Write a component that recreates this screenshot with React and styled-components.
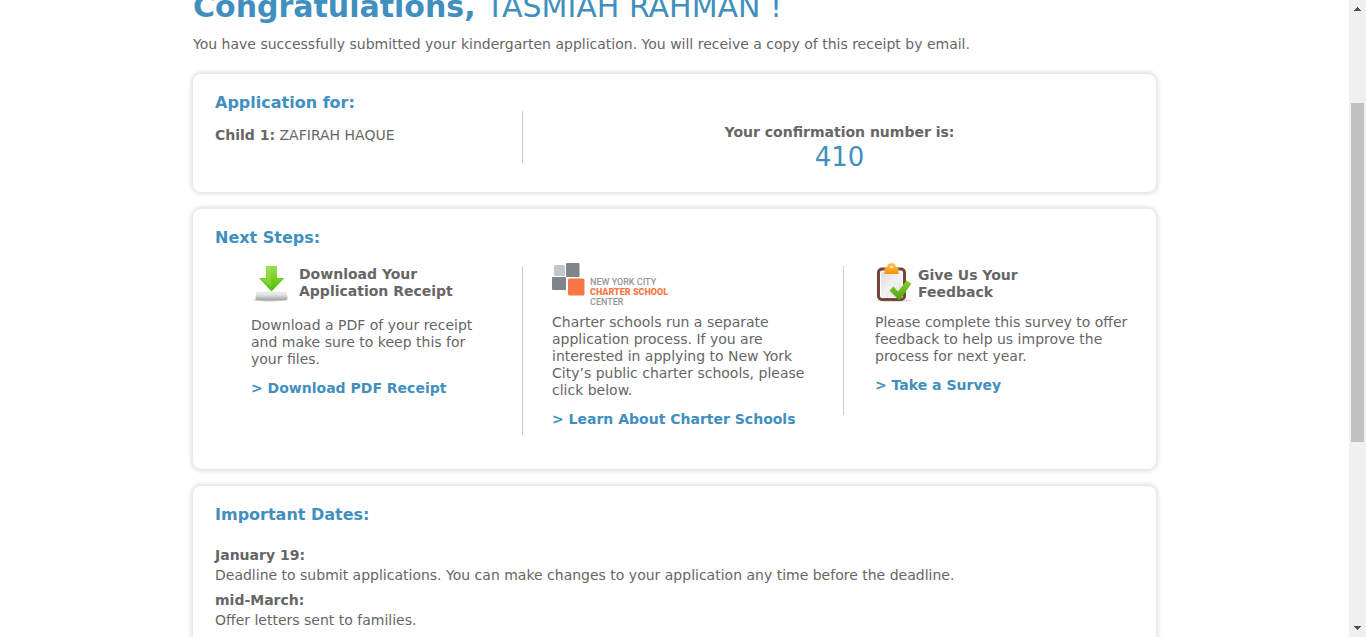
import React from "react";
import styled, { createGlobalStyle } from "styled-components";

const GlobalStyle = createGlobalStyle`
  *, *::before, *::after { box-sizing: border-box; }
  body {
    margin: 0;
    background: #fff;
    color: #666;
    font-family: Verdana, "DejaVu Sans", sans-serif;
    font-size: 14px;
    line-height: 17px;
  }
  h1, h2, h3, p, dl, dd { margin: 0; }
`;

const Window = styled.div`
  display: flex;
  height: 100vh;
  overflow: hidden;
`;

const Viewport = styled.main`
  flex: 1;
  min-width: 0;
  overflow: hidden;
`;

/* The page is shown scrolled, with the top of the title out of view. */
const Page = styled.div`
  max-width: 963px;
  margin: -11px auto 0;
`;

const Title = styled.h1`
  color: #418fbe;
  font-size: 30px;
  line-height: 36px;
  font-weight: 700;
  white-space: nowrap;

  span { font-weight: 400; }
`;

const Intro = styled.p`
  margin: 9px 0 20px;
  line-height: 20px;
`;

const Card = styled.section`
  margin-bottom: 17px;
  padding: 19px 0 ${(p) => p.$bottom}px 22px;
  border-radius: 8px;
  background: #fff;
  box-shadow: 0 0 4px 2px #e0e0e0;
`;

const CardTitle = styled.h2`
  color: #418fbe;
  font-size: 16px;
  line-height: 20px;
`;

const Summary = styled.div`
  display: grid;
  grid-template-columns: 307fr 1px 633fr;
`;

const Child = styled.p`
  margin-top: 14px;
`;

const Divider = styled.div`
  height: ${(p) => p.$height}px;
  margin-top: ${(p) => p.$top}px;
  background: #ccc;
`;

const Confirmation = styled.div`
  margin-top: 31px;
  text-align: center;
`;

const Number = styled.p`
  color: #418fbe;
  font-size: 26px;
  line-height: 32px;
`;

const Steps = styled.div`
  display: grid;
  grid-template-columns: 307fr 1px 320fr 1px 312fr;
  align-items: start;
  margin-top: 15px;
`;

const Step = styled.article`
  padding: 0 ${(p) => p.$right}px 0 ${(p) => p.$left}px;
`;

const StepHead = styled.div`
  display: flex;
  gap: ${(p) => p.$gap}px;
  height: ${(p) => p.$height}px;
`;

const StepTitle = styled.h3`
  margin-top: ${(p) => p.$top}px;
  font-size: 14px;
  line-height: 17px;
`;

const StepLink = styled.a`
  display: block;
  margin-top: 12px;
  color: #418fbe;
  font-weight: 700;
  text-decoration: none;
  white-space: nowrap;
`;

const LogoName = styled.div`
  margin-top: 14px;
  color: #929799;
  font: 500 9px/10px Roboto, sans-serif;
  white-space: nowrap;

  strong {
    display: block;
    color: #f67846;
    font-weight: 900;
  }
`;

const Dates = styled.dl`
  margin-top: 20px;
  line-height: 20px;

  dt { font-weight: 700; }
  dd + dt { margin-top: 5px; }
`;

const ScrollBar = styled.div`
  display: flex;
  flex: 0 0 17px;
  flex-direction: column;
  align-items: center;
  background: #f0f0f0;
`;

const Track = styled.div`
  display: flex;
  flex: 1;
  flex-direction: column;
  width: 13px;
`;

const Thumb = styled.div`
  flex: 339;
  background: #c1c1c1;
`;

const Space = styled.div`
  flex: ${(p) => p.$grow};
`;

const Arrow = ({ down }) => (
  <svg width="17" height="17" viewBox="0 0 17 17" shapeRendering="crispEdges" aria-hidden="true">
    <path
      fill="#505050"
      d={down ? "M5 6h7v1h-1v1h-1v1h-1v1h-1v-1h-1v-1h-1v-1h-1z" : "M5 11h7v-1h-1v-1h-1v-1h-1v-1h-1v1h-1v1h-1v1h-1z"}
    />
  </svg>
);

const DownloadIcon = () => (
  <svg width="38" height="40" viewBox="0 0 38 40" aria-hidden="true">
    <defs>
      <linearGradient id="arrow" x1="0" y1="0" x2="0" y2="1">
        <stop offset="0" stopColor="#a0dc4c" />
        <stop offset=".5" stopColor="#76cf22" />
        <stop offset="1" stopColor="#4fbd0c" />
      </linearGradient>
      <linearGradient id="tray" x1="0" y1="0" x2="0" y2="1">
        <stop offset="0" stopColor="#f2f2f2" />
        <stop offset=".5" stopColor="#d5d5d5" />
        <stop offset="1" stopColor="#a5a5a5" />
      </linearGradient>
      <radialGradient id="trayShade">
        <stop offset="0" stopColor="#aaa" />
        <stop offset=".7" stopColor="#ccc" />
        <stop offset="1" stopColor="#fff" />
      </radialGradient>
    </defs>
    <ellipse cx="19" cy="37" rx="19" ry="1.800" fill="url(#trayShade)" />
    <path d="M6 29h28q1 0 1.500 1l1 4q.5 3-2 3H6.500q-2.500 0-2-3l1-4q0-1 .5-1z" fill="url(#tray)" />
    <path d="M7 29h26q2 0 2.500 3H4.500q.5-3 2.500-3z" fill="#e6e6e6" />
    <path d="M15 3h11v12h7.500L20.500 28.500 8 15h7z" fill="url(#arrow)" />
    <path d="M16 4h4v20L10.500 16H16z" fill="#b5e878" opacity=".3" />
  </svg>
);

const ClipboardIcon = () => (
  <svg width="38" height="40" viewBox="0 0 38 40" aria-hidden="true">
    <defs>
      <linearGradient id="paper" x1="0" y1="0" x2="1" y2="1">
        <stop offset="0" stopColor="#dcdcdc" />
        <stop offset=".5" stopColor="#f2f2f2" />
        <stop offset="1" stopColor="#e0e0e0" />
      </linearGradient>
      <linearGradient id="clip" x1="0" y1="0" x2="0" y2="1">
        <stop offset="0" stopColor="#ffc64a" />
        <stop offset="1" stopColor="#f59208" />
      </linearGradient>
      <linearGradient id="check" x1="0" y1="0" x2="0" y2="1">
        <stop offset="0" stopColor="#8bd02e" />
        <stop offset="1" stopColor="#4da010" />
      </linearGradient>
    </defs>
    <ellipse cx="19" cy="37.500" rx="18" ry="1.500" fill="#ddd" />
    <rect x="3.500" y="6" width="26" height="30.500" rx="3.500" fill="#fff" stroke="#75453b" strokeWidth="3" />
    <rect x="6" y="9" width="21" height="25" rx="1" fill="url(#paper)" />
    <path
      d="M9.500 6q0-1.500 2.500-1.800Q12.500 0 16.500 0t4.500 4.200q2.500.3 2.500 1.800v5h-14z"
      fill="url(#clip)"
    />
    <circle cx="16.500" cy="4" r="1.300" fill="#fff4d8" />
    <path d="M14.500 27.500l4-4 4.500 5 8.500-11 5 3L24.500 37.500z" fill="url(#check)" />
  </svg>
);

const CharterMark = () => (
  <svg width="33" height="33" viewBox="0 0 33 33" aria-hidden="true">
    <rect x="2" y="2" width="11" height="11" rx="1.500" fill="#c3c6c5" />
    <rect x="14" y="0" width="13.500" height="14" rx="1" fill="#7f8689" />
    <rect x="0" y="14" width="14" height="13" rx="1" fill="#7f8689" />
    <rect x="15" y="15" width="18" height="18" rx="1.500" fill="#fff" />
    <rect x="16" y="15.500" width="16.500" height="17" rx="1.500" fill="#f67846" />
  </svg>
);

export default function App() {
  return (
    <Window>
      <GlobalStyle />
      <Viewport>
        <Page>
          <Title>
            Congratulations, <span>TASMIAH RAHMAN !</span>
          </Title>
          <Intro>
            You have successfully submitted your kindergarten application. You will receive a copy of this receipt by
            email.
          </Intro>

          <Card $bottom={19}>
            <Summary>
              <div>
                <CardTitle>Application for:</CardTitle>
                <Child>
                  <b>Child 1:</b> ZAFIRAH HAQUE
                </Child>
              </div>
              <Divider $height={52} $top={18} />
              <Confirmation>
                <b>Your confirmation number is:</b>
                <Number>410</Number>
              </Confirmation>
            </Summary>
          </Card>

          <Card $bottom={34}>
            <CardTitle>Next Steps:</CardTitle>
            <Steps>
              <Step $left={36} $right={24}>
                <StepHead $height={54} $gap={10}>
                  <DownloadIcon />
                  <StepTitle $top={3}>
                    Download Your
                    <br />
                    Application Receipt
                  </StepTitle>
                </StepHead>
                <p>Download a PDF of your receipt and make sure to keep this for your files.</p>
                <StepLink href="#receipt">&gt; Download PDF Receipt</StepLink>
              </Step>
              <Divider $height={169} $top={3} />
              <Step $left={29} $right={24}>
                <StepHead $height={51} $gap={5}>
                  <CharterMark />
                  <LogoName>
                    NEW YORK CITY <strong>CHARTER SCHOOL</strong> CENTER
                  </LogoName>
                </StepHead>
                <p>
                  Charter schools run a separate application process. If you are interested in applying to New York
                  City’s public charter schools, please click below.
                </p>
                <StepLink href="#charter">&gt; Learn About Charter Schools</StepLink>
              </Step>
              <Divider $height={149} $top={3} />
              <Step $left={31} $right={24}>
                <StepHead $height={51} $gap={5}>
                  <ClipboardIcon />
                  <StepTitle $top={4}>
                    Give Us Your
                    <br />
                    Feedback
                  </StepTitle>
                </StepHead>
                <p>Please complete this survey to offer feedback to help us improve the process for next year.</p>
                <StepLink href="#survey">&gt; Take a Survey</StepLink>
              </Step>
            </Steps>
          </Card>

          <Card $bottom={28}>
            <CardTitle>Important Dates:</CardTitle>
            <Dates>
              <dt>January 19:</dt>
              <dd>Deadline to submit applications. You can make changes to your application any time before the deadline.</dd>
              <dt>mid-March:</dt>
              <dd>Offer letters sent to families.</dd>
            </Dates>
          </Card>
        </Page>
      </Viewport>
      <ScrollBar aria-hidden="true">
        <Arrow />
        <Track>
          <Space $grow={86} />
          <Thumb />
          <Space $grow={178} />
        </Track>
        <Arrow down />
      </ScrollBar>
    </Window>
  );
}
